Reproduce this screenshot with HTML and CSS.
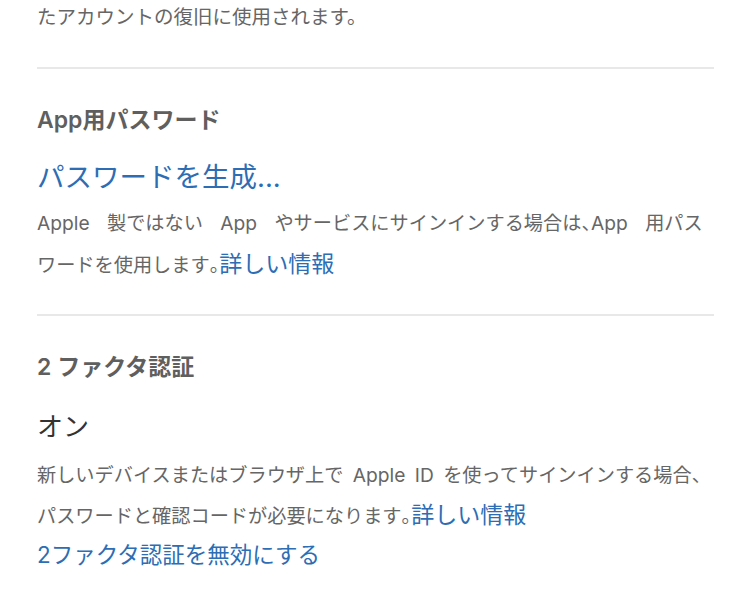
FILE: index.html
```html
<!DOCTYPE html>
<html lang="ja">
<head>
<meta charset="utf-8">
<link rel="stylesheet" href="styles.css">
</head>
<body>
<div class="page">
  <p class="lead">たアカウントの復旧に使用されます。</p>
  <section class="section">
    <h2 class="heading">App用パスワード</h2>
    <a class="action" href="#">パスワードを生成...</a>
    <p class="desc"><span class="spread">Apple 製ではない App やサービスにサインインする場合は<span class="punct">、</span>App 用パス</span><br>ワードを使用します<span class="punct">。</span><a class="more" href="#">詳しい情報</a></p>
  </section>
  <section class="section">
    <h2 class="heading">2 ファクタ認証</h2>
    <div class="status">オン</div>
    <p class="desc desc-wide">新しいデバイスまたはブラウザ上で Apple ID を使ってサインインする場合、<br>パスワードと確認コードが必要になります<span class="punct">。</span><a class="more" href="#">詳しい情報</a></p>
    <a class="toggle" href="#">2ファクタ認証を無効にする</a>
  </section>
</div>
</body>
</html>
```
FILE: styles.css
```css
html, body {
  margin: 0;
  padding: 0;
  background: #fff;
}
.page {
  padding: 0 36px 0 37px;
  font-family: "Inter", "Noto Sans CJK JP", "Noto Sans", sans-serif;
  color: #666;
}
.lead {
  margin: 0;
  font-size: 19.5px;
  line-height: 34px;
  color: #666;
}
.section {
  margin-top: 33px;
  border-top: 2px solid #e8e8e8;
  padding-top: 36px;
  display: flex;
  flex-direction: column;
  align-items: flex-start;
}
.section + .section {
  margin-top: 29px;
}
.heading {
  margin: 0;
  font-size: 23px;
  line-height: 30px;
  font-weight: 600;
  color: #5f5f5f;
}
.action {
  margin-top: 24px;
  font-size: 27.5px;
  line-height: 36px;
  color: #2d6db4;
  text-decoration: none;
}
.status {
  margin-top: 27px;
  font-size: 26px;
  line-height: 36px;
  color: #333;
}
.desc {
  margin: 7px 0 0;
  font-size: 19.2px;
  line-height: 40.5px;
  color: #666;
}
.desc-wide {
  margin-top: 9.5px;
  word-spacing: 4px;
}
.spread {
  word-spacing: 12px;
}
.punct {
  font-family: "Noto Sans CJK JP", sans-serif;
  font-feature-settings: "halt";
}
.more {
  font-size: 23px;
  line-height: 1;
  color: #2d6db4;
  text-decoration: none;
  word-spacing: normal;
}
.toggle {
  font-size: 22.5px;
  line-height: 36px;
  color: #2d6db4;
  text-decoration: none;
}
```
